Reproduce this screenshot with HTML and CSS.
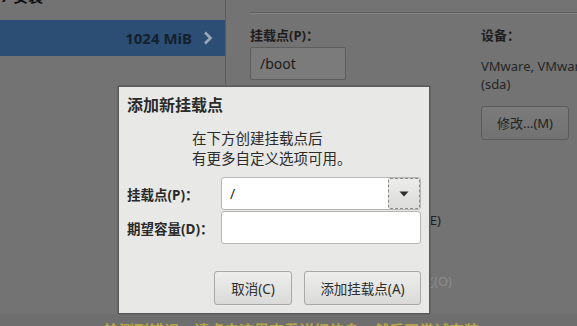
FILE: index.html
```html
<!DOCTYPE html>
<html lang="zh-CN">
<head>
<meta charset="utf-8">
<link rel="stylesheet" href="styles.css">
</head>
<body>
<div class="screen">
  <div class="layout">
    <aside class="left">
      <div class="left-title">CENTOS 7 安装</div>
      <div class="row selected">
        <span class="size">1024 MiB</span>
        <svg class="chev" width="10" height="14" viewBox="0 0 10 14"><path d="M2 1.5 L7.5 7 L2 12.5" fill="none" stroke="#9aa7b6" stroke-width="2.6"/></svg>
      </div>
    </aside>
    <main class="right">
      <div class="part-title">sda1</div>
      <div class="rule"></div>
      <div class="fields">
        <div class="col">
          <div class="blabel">挂载点(P)：</div>
          <div class="binput">/boot</div>
        </div>
        <div class="col">
          <div class="blabel">设备：</div>
          <div class="device">VMware, VMware Virtual S<br>(sda)</div>
          <div class="bbutton">修改...(M)</div>
        </div>
      </div>
      <div class="hidden-row r1"><span>加密(E)</span></div>
      <div class="hidden-row r2"><span>重新格式化(O)</span></div>
    </main>
  </div>
  <footer class="warn">检测到错误，请点击这里查看详细信息，然后再尝试安装。</footer>

  <div class="dialog">
    <h1 class="d-title">添加新挂载点</h1>
    <p class="d-desc">在下方创建挂载点后<br>有更多自定义选项可用。</p>
    <div class="d-form">
      <label class="d-label">挂载点(P)：</label>
      <div class="combo">
        <span class="combo-text">/</span>
        <span class="combo-btn"><svg width="10" height="6" viewBox="0 0 10 6"><path d="M0.5 0.5 H9.5 L5 5.5 Z" fill="#2e2e2e"/></svg></span>
      </div>
      <label class="d-label">期望容量(D)：</label>
      <div class="entry"></div>
    </div>
    <div class="d-actions">
      <button class="btn cancel">取消(C)</button>
      <button class="btn add">添加挂载点(A)</button>
    </div>
  </div>
</div>
</body>
</html>
```
FILE: styles.css
```css
html, body {
  margin: 0;
  padding: 0;
}
body {
  width: 577px;
  height: 326px;
  overflow: hidden;
  font-family: "Noto Sans", "Noto Sans CJK SC", sans-serif;
  background: #737373;
}
.screen {
  position: relative;
  width: 577px;
  height: 326px;
  overflow: hidden;
  background: #737373;
}
.layout {
  display: flex;
  height: 314px;
}
.left {
  width: 225px;
  border-right: 1px solid #5c5c5c;
  flex-shrink: 0;
}
.left-title {
  margin-top: -14px;
  height: 35px;
  margin-left: -62px;
  font-size: 15px;
  font-weight: 700;
  color: #111;
  line-height: 20px;
}
.row.selected {
  height: 36px;
  margin-top: -1px;
  background: #2c4e74;
  display: flex;
  align-items: center;
  justify-content: flex-end;
  padding-right: 12px;
  gap: 11px;
}
.size {
  font-size: 15px;
  font-weight: 700;
  color: #14202e;
}
.chev { display: block; }
.right {
  flex: 1;
  padding-left: 24px;
}
.part-title {
  margin-top: -15px;
  height: 20px;
  font-size: 14px;
  font-weight: 700;
  color: #222;
  line-height: 20px;
}
.rule {
  margin-top: 7px;
  height: 1px;
  background: #5f5f5f;
  border-bottom: 1px solid #848484;
}
.fields {
  display: grid;
  grid-template-columns: 231px 1fr;
  margin-top: 12px;
}
.blabel {
  font-size: 13px;
  font-weight: 700;
  color: #1e1e1e;
  line-height: 18px;
  height: 21px;
}
.binput {
  width: 85px;
  height: 31px;
  border: 1px solid #5d5d5d;
  border-radius: 2px;
  background: #7b7b7b;
  font-size: 14px;
  color: #1c1c1c;
  line-height: 31px;
  padding-left: 9px;
}
.device {
  margin-top: 10px;
  font-size: 13px;
  color: #262626;
  line-height: 18px;
  white-space: nowrap;
}
.bbutton {
  margin-top: 13px;
  width: 86px;
  height: 32px;
  border: 1px solid #5a5a5a;
  border-radius: 3px;
  background: linear-gradient(#7b7b7b, #727272);
  font-size: 13px;
  color: #222;
  text-align: center;
  line-height: 32px;
}
.hidden-row {
  width: 191px;
  text-align: right;
  font-size: 13px;
  line-height: 18px;
  color: #1d1d1d;
}
.hidden-row.r1 { margin-top: 71px; }
.hidden-row.r2 { margin-top: 43px; width: 202px; color: #8b8b8b; }
.warn {
  height: 12px;
  padding-left: 104px;
  font-size: 15px;
  line-height: 12px;
  padding-top: 10px;
  color: #b5a44a;
  font-weight: 700;
  white-space: nowrap;
  overflow: hidden;
  background: #6e6e6e;
}
.dialog {
  position: absolute;
  left: 118px;
  top: 86px;
  width: 310px;
  height: 226px;
  background: #e8e8e6;
  border: 1px solid #595959;
  box-shadow: 0 0 0 1px #666;
}
.d-title {
  margin: 7px 0 0 8px;
  font-size: 16px;
  font-weight: 700;
  color: #2a2a2a;
  line-height: 22px;
}
.d-desc {
  margin: 13px 0 0 73px;
  font-size: 14.5px;
  line-height: 19.5px;
  color: #2b2b2b;
}
.d-form {
  display: grid;
  grid-template-columns: 94px 200px;
  row-gap: 1px;
  margin: 9px 0 0 8px;
  align-items: center;
}
.d-label {
  font-size: 13.5px;
  font-weight: 700;
  color: #2a2a2a;
}
.combo {
  height: 31px;
  border: 1px solid #b5b5b3;
  border-radius: 3px;
  background: #fff;
  display: flex;
  align-items: center;
  width: 198px;
}
.combo-text {
  flex: 1;
  padding-left: 8px;
  font-size: 14px;
  color: #2a2a2a;
}
.combo-btn {
  width: 30px;
  height: 29px;
  border: 1px dashed #8a8a8a;
  border-radius: 2px;
  background: linear-gradient(#ececea, #dcdcda);
  display: flex;
  align-items: center;
  justify-content: center;
}
.entry {
  width: 198px;
  height: 31px;
  border: 1px solid #b5b5b3;
  border-radius: 3px;
  background: #fff;
}
.d-actions {
  display: flex;
  justify-content: flex-end;
  gap: 12px;
  margin: 27px 8px 0 0;
}
.btn {
  height: 34px;
  border: 1px solid #a9a9a7;
  border-radius: 3px;
  background: linear-gradient(#eeeeec, #dadad8);
  font-family: "Noto Sans", "Noto Sans CJK SC", sans-serif;
  font-size: 13.5px;
  color: #2e2e2e;
  padding: 0;
}
.btn.cancel { width: 78px; }
.btn.add { width: 117px; }
```
